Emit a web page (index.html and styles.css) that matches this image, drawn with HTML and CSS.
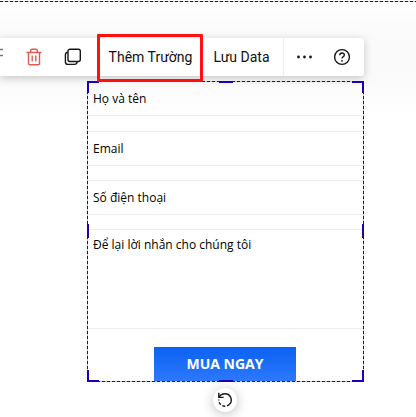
FILE: index.html
```
<!DOCTYPE html>
<html lang="vi">
<head>
<meta charset="utf-8">
<title>Form</title>
<link rel="stylesheet" href="styles.css">
</head>
<body>
<div class="section-line"></div>
<div class="toolbar">
  <svg class="align" width="4" height="38" viewBox="0 0 4 38"><path d="M0 11.5H3M0 17.5H3" stroke="#777" stroke-width="1.3"/></svg>
  <svg class="trash" width="16" height="18" viewBox="0 0 16 18" fill="none" stroke="#e05a50" stroke-width="1.4"><path d="M.5 4.5H15.5M2.5 4.5V15.2Q2.5 16.8 4 16.8H12Q13.5 16.8 13.5 15.2V4.5M4.7 4.2V2.5Q4.7 1.2 6 1.2H10Q11.3 1.2 11.3 2.5V4.2M6.2 7.5V13.5M9.8 7.5V13.5"/></svg>
  <svg class="copy" width="18" height="18" viewBox="0 0 18 18" fill="none" stroke="#171717" stroke-width="1.4"><rect x="4" y="1.2" width="12.3" height="12.3" rx="2"/><path d="M3.7 4.3Q1.4 4.5 1.4 6.8V14Q1.4 16.4 3.8 16.4H10.5Q12.8 16.4 13.2 14"/></svg>
  <div class="action add">Thêm Trường</div>
  <div class="action save">Lưu Data</div>
  <svg class="more" width="17" height="6" viewBox="0 0 17 6" fill="#171717"><circle cx="2.5" cy="3" r="1.4"/><circle cx="8.5" cy="3" r="1.4"/><circle cx="14.5" cy="3" r="1.4"/></svg>
  <svg class="help" width="18" height="18" viewBox="0 0 18 18" fill="none" stroke="#171717" stroke-width="1.4"><circle cx="9" cy="9" r="7.4"/><path d="M6.7 7.2Q6.7 5 9 5T11.3 7.1Q11.3 8.3 10 8.9Q9 9.4 9 10.6"/><circle cx="9" cy="12.8" r=".9" fill="#171717" stroke="none"/></svg>
</div>
<form class="form">
  <div class="field first">Họ và tên</div>
  <div class="field">Email</div>
  <div class="field">Số điện thoại</div>
  <div class="field message">Để lại lời nhắn cho chúng tôi</div>
  <button class="submit" type="button">MUA NGAY</button>
  <i class="corner tl"></i><i class="corner tr"></i><i class="corner bl"></i><i class="corner br"></i>
  <i class="handle top"></i><i class="handle right"></i><i class="handle bottom"></i><i class="handle left"></i>
</form>
<div class="highlight"></div>
<div class="rotate"><svg width="16" height="16" viewBox="0 0 16 16" fill="none" stroke="#171717" stroke-width="1.4"><path d="M2.2 5Q4 1.8 8 1.8A6.2 6.2 0 0 1 12.5 12.3"/><path d="M12.5 12.3A6.2 6.2 0 0 1 1.8 7.5" stroke-dasharray="3 1.7"/><path d="M1.8 .7V5.4H6.6"/></svg></div>
</body>
</html>
```
FILE: styles.css
```
* { box-sizing: border-box; }
body {
  display: flow-root;
  margin: 0;
  height: 417px;
  overflow: hidden;
  position: relative;
  background: linear-gradient(#fff 0, #fafafa 38px, #fafafa 76px, #fff 120px);
  font-family: "Open Sans", sans-serif;
}
.section-line {
  height: 1px;
  margin-top: 1px;
  background: repeating-linear-gradient(90deg, #1c00b5 0 3px, #d0cddb 3px 5px);
}
.toolbar {
  display: flex;
  align-items: center;
  width: 364px;
  height: 38px;
  margin-top: 36px;
  background: #fff;
  border-radius: 0 3px 3px 0;
  box-shadow: 0 2px 9px rgba(0, 0, 0, .22);
  font: 14px Roboto, sans-serif;
  color: #111;
}
.toolbar svg { flex: none; }
.trash { margin-left: 22px; }
.copy { margin-left: 22px; }
.action {
  height: 38px;
  line-height: 39px;
  white-space: nowrap;
  text-align: center;
}
.add { width: 107px; margin-left: 15px; }
.save { width: 80px; padding-right: 4px; border-right: 1px solid #eee; }
.more { margin-left: 12px; }
.help { margin-left: 20px; }
.form {
  position: relative;
  width: 277px;
  height: 301px;
  margin: 5px 0 0 87px;
  padding: 1px;
  background:
    repeating-linear-gradient(90deg, #1c00b5 0 3px, #c6c2d6 3px 5px) top / 100% 1px no-repeat,
    repeating-linear-gradient(90deg, #1c00b5 0 3px, #c6c2d6 3px 5px) bottom / 100% 1px no-repeat,
    repeating-linear-gradient(#1c00b5 0 3px, #c6c2d6 3px 5px) left / 1px 100% no-repeat,
    repeating-linear-gradient(#1c00b5 0 3px, #c6c2d6 3px 5px) right / 1px 100% no-repeat;
}
.field {
  height: 35px;
  margin-bottom: 14px;
  padding-left: 5px;
  border: solid #ececec;
  border-width: 1px 0;
  font-size: 12px;
  line-height: 34px;
  color: #000;
}
.first { height: 34px; margin-bottom: 15px; border-top: 0; }
.message { height: 100px; margin-bottom: 18px; line-height: 30px; }
.submit {
  display: block;
  width: 142px;
  height: 34px;
  margin-left: 66px;
  padding: 0;
  border: 0;
  background: linear-gradient(#0b62f2, #2d78ff);
  color: #fff;
  font: bold 14px/34px "Open Sans", sans-serif;
}
.corner, .handle { position: absolute; border: 0 solid #1c00b5; }
.corner { width: 12px; height: 12px; }
.tl { top: 0; left: 0; border-width: 2px 0 0 2px; }
.tr { top: 0; right: 0; border-width: 2px 2px 0 0; }
.bl { bottom: 0; left: 0; border-width: 0 0 2px 2px; }
.br { bottom: 0; right: 0; border-width: 0 2px 2px 0; }
.handle { background: #1c00b5; }
.top, .bottom { left: 132px; width: 14px; height: 2px; }
.left, .right { top: 143px; width: 2px; height: 14px; }
.top { top: 0; }
.bottom { bottom: 0; }
.left { left: 0; }
.right { right: 0; }
.highlight {
  position: absolute;
  left: 97px;
  top: 34px;
  width: 106px;
  height: 48px;
  border: 3px solid #f11;
  border-radius: 1px;
}
.rotate {
  display: flex;
  align-items: center;
  justify-content: center;
  width: 24px;
  height: 24px;
  margin: 6px 0 0 213px;
  border-radius: 50%;
  background: #fff;
  box-shadow: 0 2px 12px rgba(0, 0, 0, .25);
}
```
